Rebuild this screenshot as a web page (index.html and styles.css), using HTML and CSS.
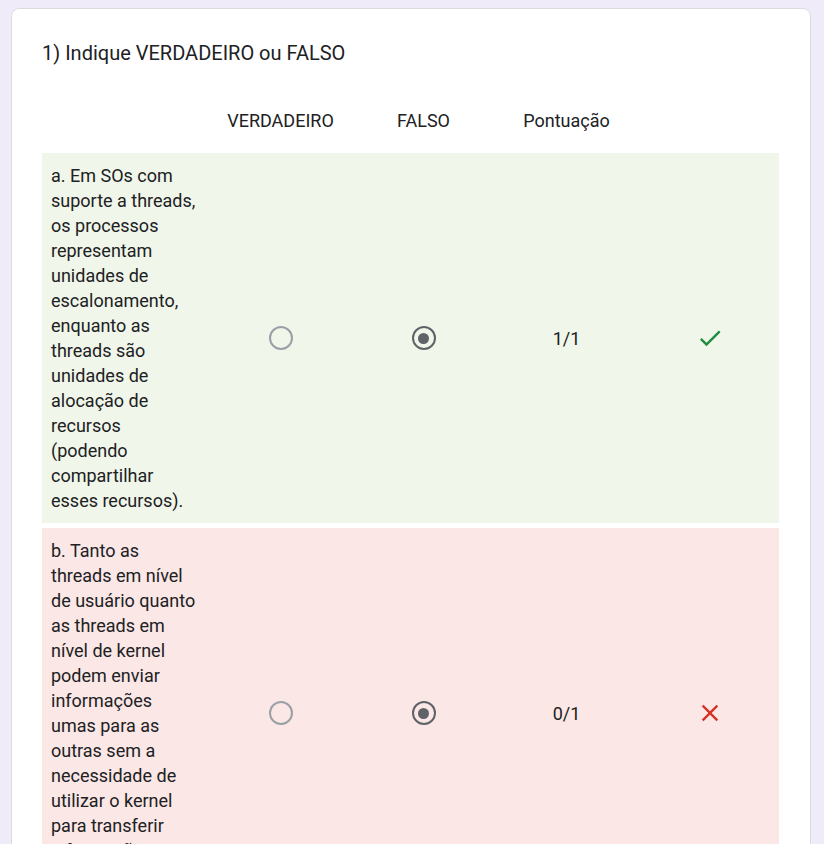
FILE: index.html
```html
<!DOCTYPE html>
<html lang="pt">
<head>
<meta charset="utf-8">
<title>Indique VERDADEIRO ou FALSO</title>
<link rel="stylesheet" href="styles.css">
</head>
<body>
<div class="card">
  <div class="title">1) Indique VERDADEIRO ou FALSO</div>
  <div class="grid header">
    <div></div>
    <div class="col">VERDADEIRO</div>
    <div class="col">FALSO</div>
    <div class="col">Pontuação</div>
    <div></div>
  </div>
  <div class="grid row correct">
    <div class="stmt">a. Em SOs com suporte a threads, os processos representam unidades de escalonamento, enquanto as threads são unidades de alocação de recursos (podendo compartilhar esses recursos).</div>
    <div class="col"><span class="radio"></span></div>
    <div class="col"><span class="radio checked"></span></div>
    <div class="col score">1/1</div>
    <div class="col mark">
      <svg class="icon ok" viewBox="0 0 24 24" width="28" height="28"><path d="M9 16.17L4.83 12l-1.42 1.41L9 19 21 7l-1.41-1.41z"/></svg>
    </div>
  </div>
  <div class="grid row wrong">
    <div class="stmt">b. Tanto as threads em nível de usuário quanto as threads em nível de kernel podem enviar informações umas para as outras sem a necessidade de utilizar o kernel para transferir informações entre elas.</div>
    <div class="col"><span class="radio"></span></div>
    <div class="col"><span class="radio checked"></span></div>
    <div class="col score">0/1</div>
    <div class="col mark">
      <svg class="icon bad" viewBox="0 0 24 24" width="28" height="28"><path d="M19 6.41L17.59 5 12 10.59 6.41 5 5 6.41 10.59 12 5 17.59 6.41 19 12 13.41 17.59 19 19 17.59 13.41 12z"/></svg>
    </div>
  </div>
</div>
</body>
</html>
```
FILE: styles.css
```css
html, body {
  margin: 0;
  padding: 0;
  background: #f0ebf8;
}
body {
  font-family: Roboto, "Liberation Sans", sans-serif;
  color: #202124;
}
.card {
  box-sizing: border-box;
  width: 800px;
  margin: 8px 0 0 11px;
  background: #fff;
  border: 1px solid #dadce0;
  border-radius: 8px;
  padding: 32px 31px 24px 30px;
}
.title {
  font-size: 20px;
  line-height: 24px;
}
.grid {
  display: grid;
  grid-template-columns: 167px 143px 143px 143px 1fr;
}
.header {
  margin-top: 44px;
  height: 44px;
  font-size: 18px;
  line-height: 24px;
}
.col {
  display: flex;
  justify-content: center;
  align-items: center;
  font-size: 18px;
}
.header .col {
  align-items: flex-start;
}
.row {
  margin-bottom: 5px;
}
.correct { background: #f0f6e9; }
.wrong { background: #fbe7e5; }
.stmt {
  box-sizing: border-box;
  padding: 10px 11px 10px 9px;
  font-size: 18px;
  line-height: 25px;
}
.radio {
  box-sizing: border-box;
  width: 24px;
  height: 24px;
  border: 2px solid #9aa0a6;
  border-radius: 50%;
  display: flex;
  align-items: center;
  justify-content: center;
}
.radio.checked {
  border-color: #5f6368;
}
.radio.checked::after {
  content: "";
  width: 11px;
  height: 11px;
  border-radius: 50%;
  background: #5f6368;
}
.mark { padding-left: 3px; }
.icon.ok { fill: #1e8e3e; }
.icon.bad { fill: #d93025; }
```
